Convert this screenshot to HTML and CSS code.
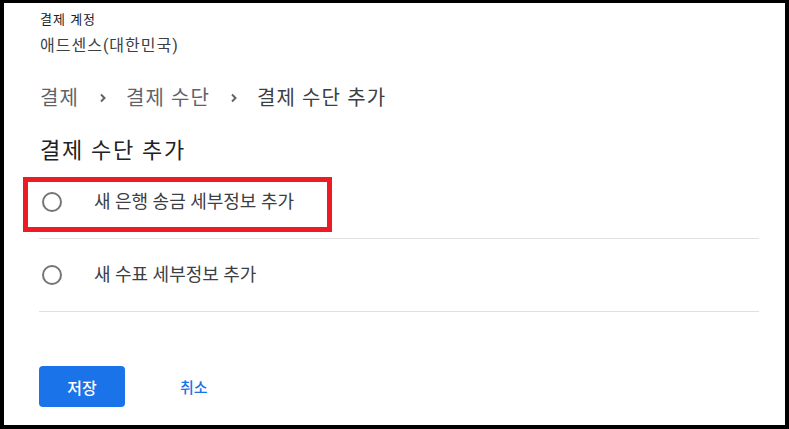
FILE: index.html
```html
<!DOCTYPE html>
<html lang="ko">
<head>
    <meta charset="UTF-8">
    <meta name="viewport" content="width=device-width, initial-scale=1.0">
    <title>결제 수단 추가</title>
    <link rel="stylesheet" href="styles.css">
</head>
<body>

    <div class="frame">
        <div class="page">

            <!-- Account header -->
            <div class="account">
                <p class="account-label">결제 계정</p>
                <p class="account-name">애드센스(대한민국)</p>
            </div>

            <!-- Breadcrumb -->
            <nav class="breadcrumb">
                <span class="crumb">결제</span>
                <span class="crumb-sep">
                    <svg width="8" height="10" viewBox="0 0 8 10"><path d="M2 1.5 L5.5 5 L2 8.5" fill="none" stroke="#5f6368" stroke-width="2"/></svg>
                </span>
                <span class="crumb">결제 수단</span>
                <span class="crumb-sep">
                    <svg width="8" height="10" viewBox="0 0 8 10"><path d="M2 1.5 L5.5 5 L2 8.5" fill="none" stroke="#5f6368" stroke-width="2"/></svg>
                </span>
                <span class="crumb current">결제 수단 추가</span>
            </nav>

            <h1 class="title">결제 수단 추가</h1>

            <!-- Payment options -->
            <div class="options">
                <label class="option highlighted">
                    <span class="radio"></span>
                    <span class="option-text">새 은행 송금 세부정보 추가</span>
                    <span class="highlight-box"></span>
                </label>
                <label class="option">
                    <span class="radio"></span>
                    <span class="option-text">새 수표 세부정보 추가</span>
                </label>
            </div>

            <div class="actions">
                <button class="btn-save">저장</button>
                <button class="btn-cancel">취소</button>
            </div>

        </div>
    </div>

</body>
</html>
```

FILE: styles.css
```css
/* Global Styles */
* {
    margin: 0;
    padding: 0;
    box-sizing: border-box;
    font-family: Roboto, 'Noto Sans CJK KR', sans-serif;
}

body {
    background: #000000;
    height: 100vh;
}

.frame {
    height: 100vh;
    border: 4px solid #000000;
    border-top-width: 3px;
    background: #ffffff;
}

.page {
    width: 755px;
    padding: 9px 0 0 35px;
}

/* ACCOUNT */
.account-label {
    font-size: 13px;
    line-height: 16px;
    letter-spacing: 1px;
    color: #202124;
    padding-left: 1px;
}

.account-name {
    margin-top: 8px;
    font-size: 16px;
    line-height: 20px;
    letter-spacing: 1px;
    color: #3c4043;
    padding-left: 1px;
}

/* BREADCRUMB */
.breadcrumb {
    display: flex;
    align-items: center;
    margin-top: 29px;
    font-size: 20px;
    line-height: 26px;
    letter-spacing: 1.1px;
    color: #5f6368;
    padding-left: 1px;
}

.crumb-sep {
    width: 47px;
    display: flex;
    justify-content: center;
    align-items: center;
}

.crumb.current {
    color: #3c4043;
}

/* TITLE */
.title {
    margin-top: 26px;
    font-size: 22px;
    line-height: 28px;
    letter-spacing: 1.7px;
    font-weight: 400;
    color: #202124;
    padding-left: 1px;
}

/* OPTIONS */
.options {
    margin-top: 1px;
}

.option {
    position: relative;
    display: flex;
    align-items: center;
    height: 73px;
    border-bottom: 1px solid #e0e0e0;
    cursor: pointer;
}

.radio {
    width: 20px;
    height: 20px;
    margin-left: 3px;
    border: 2px solid #757575;
    border-radius: 50%;
}

.option-text {
    margin-left: 32px;
    font-size: 18px;
    line-height: 24px;
    color: #3c4043;
}

.highlight-box {
    position: absolute;
    left: -16px;
    top: 11px;
    width: 309px;
    height: 55px;
    border: 5.5px solid #ed1c24;
}

/* ACTIONS */
.actions {
    display: flex;
    align-items: center;
    margin-top: 54px;
}

.btn-save {
    width: 86px;
    height: 41px;
    background: #1a73e8;
    color: #ffffff;
    border: none;
    border-radius: 4px;
    font-size: 16px;
    font-weight: 500;
    cursor: pointer;
}

.btn-cancel {
    margin-left: 39px;
    padding: 0 16px;
    height: 41px;
    background: none;
    border: none;
    color: #1a73e8;
    font-size: 15px;
    font-weight: 500;
    cursor: pointer;
}
```
